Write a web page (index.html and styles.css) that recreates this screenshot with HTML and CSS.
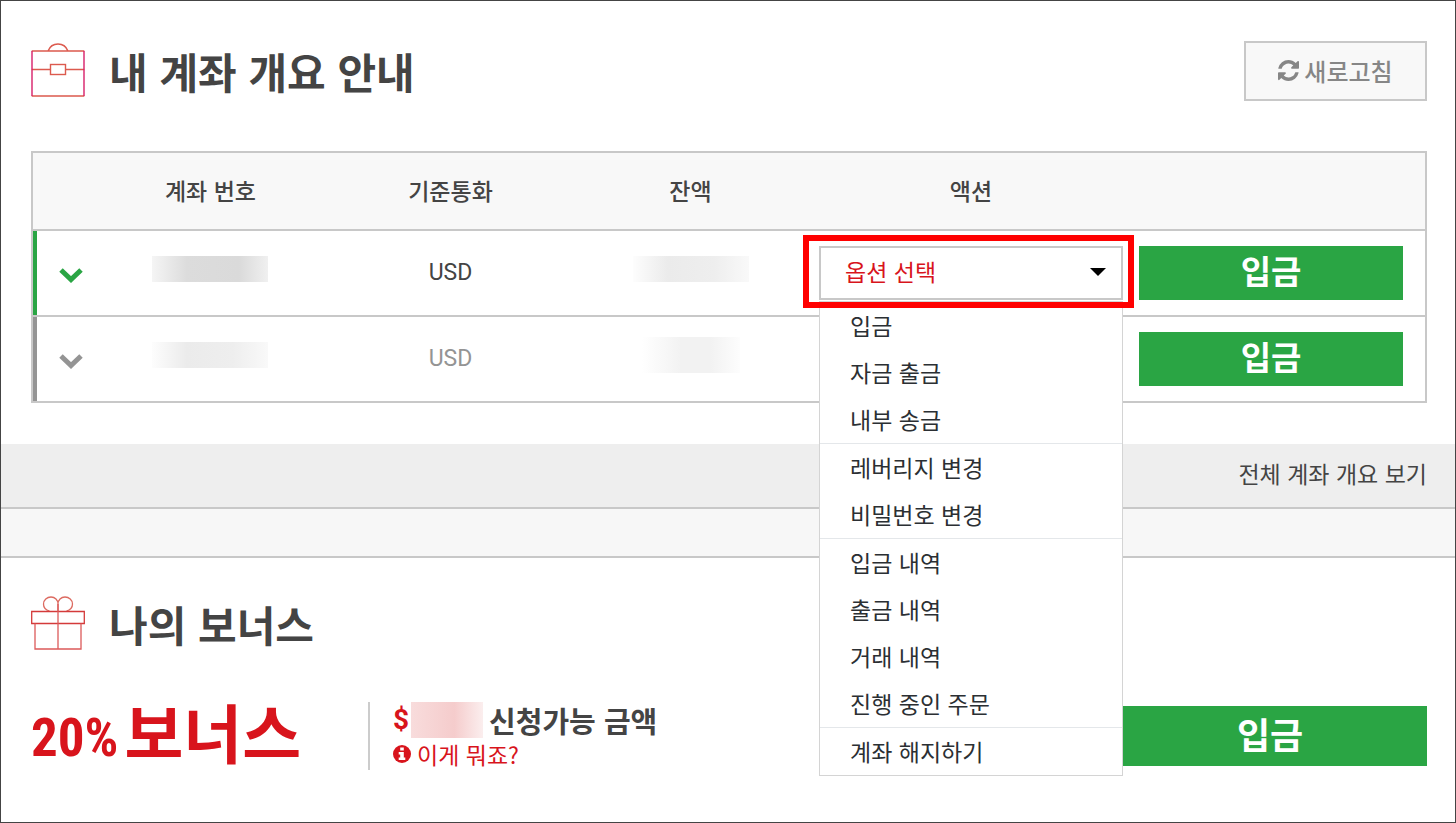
FILE: index.html
```html
<!DOCTYPE html>
<html lang="ko">
<head>
    <meta charset="UTF-8">
    <meta name="viewport" content="width=device-width, initial-scale=1.0">
    <title>내 계좌 개요 안내</title>
    <link rel="stylesheet" href="styles.css">
</head>
<body>
    <main class="page">
        <section class="accounts">
            <header class="section-header">
                <svg class="section-icon" viewBox="0 0 54 54" fill="none" stroke-width="1.4">
                    <path d="M17 8C19 3 23 1 27 1s8 2 10 7M.7 8h52.6M.7 53h52.6M.7 26.500H19M35 26.500h18.300" stroke="#dc5a4e"/>
                    <path d="M1 8v45M53 8v45" stroke="#d8206a"/>
                    <rect x="19.500" y="21.500" width="15" height="10" stroke="#dc5a4e"/>
                </svg>
                <h1>내 계좌 개요 안내</h1>
                <button class="refresh-btn" type="button">
                    <svg class="refresh-icon" viewBox="0 0 1536 1536" fill="currentColor">
                        <path d="M1511 928q0 5-1 7-64 268-268 434.500T764 1536q-146 0-282.500-55T238 1324l-129 129q-19 19-45 19t-45-19-19-45V960q0-26 19-45t45-19h448q26 0 45 19t19 45-19 45l-137 137q71 66 161 102t187 36q134 0 250-65t186-179q11-17 53-117 8-23 30-23h192q13 0 22.500 9.500t9.500 22.500zm25-800v448q0 26-19 45t-45 19h-448q-26 0-45-19t-19-45 19-45l138-138Q969 256 768 256q-134 0-250 65T332 500q-11 17-53 117-8 23-30 23H50q-13 0-22.500-9.500T18 608v-7q65-268 270-434.500T768 0q146 0 284 55.500T1297 212l130-129q19-19 45-19t45 19 19 45z"/>
                    </svg>
                    <span>새로고침</span>
                </button>
            </header>

            <table class="account-table">
                <colgroup>
                    <col class="col-toggle">
                    <col class="col-number">
                    <col>
                    <col class="col-balance">
                    <col class="col-action">
                    <col class="col-deposit">
                </colgroup>
                <thead>
                    <tr>
                        <th></th>
                        <th>계좌 번호</th>
                        <th>기준통화</th>
                        <th>잔액</th>
                        <th>액션</th>
                        <th></th>
                    </tr>
                </thead>
                <tbody>
                    <tr class="active">
                        <td class="toggle-cell">
                            <button class="toggle" type="button" aria-label="계좌 상세">
                                <svg viewBox="0 0 24 16" fill="none" stroke="currentColor" stroke-width="5"><path d="M2 3l10 9.500L22 3"/></svg>
                            </button>
                        </td>
                        <td><span class="masked masked-dark"></span></td>
                        <td>USD</td>
                        <td><span class="masked"></span></td>
                        <td class="action-cell">
                            <div class="dropdown">
                                <select class="option-select" aria-label="액션">
                                    <option>옵션 선택</option>
                                </select>
                                <ul class="menu">
                                    <li><a href="#">입금</a></li>
                                    <li><a href="#">자금 출금</a></li>
                                    <li><a href="#">내부 송금</a></li>
                                    <li class="divided"><a href="#">레버리지 변경</a></li>
                                    <li><a href="#">비밀번호 변경</a></li>
                                    <li class="divided"><a href="#">입금 내역</a></li>
                                    <li><a href="#">출금 내역</a></li>
                                    <li><a href="#">거래 내역</a></li>
                                    <li><a href="#">진행 중인 주문</a></li>
                                    <li class="divided"><a href="#">계좌 해지하기</a></li>
                                </ul>
                                <div class="highlight"></div>
                            </div>
                        </td>
                        <td class="deposit-cell"><button class="deposit-btn" type="button">입금</button></td>
                    </tr>
                    <tr class="inactive">
                        <td class="toggle-cell">
                            <button class="toggle" type="button" aria-label="계좌 상세">
                                <svg viewBox="0 0 24 16" fill="none" stroke="currentColor" stroke-width="5"><path d="M2 3l10 9.500L22 3"/></svg>
                            </button>
                        </td>
                        <td><span class="masked"></span></td>
                        <td>USD</td>
                        <td><span class="masked masked-light"></span></td>
                        <td></td>
                        <td class="deposit-cell"><button class="deposit-btn" type="button">입금</button></td>
                    </tr>
                </tbody>
            </table>
        </section>

        <div class="overview-bar">
            <a href="#">전체 계좌 개요 보기</a>
        </div>
        <div class="spacer"></div>

        <section class="bonus">
            <header class="section-header">
                <svg class="section-icon" viewBox="0 0 54 54" fill="none" stroke-width="1.300">
                    <path d="M27 15V8c0-4-3-7-7-7s-7.500 3-7.500 7 2.500 6 6 7M27 8c0-4 3-7 7-7s7.500 3 7.500 7-2.500 6-6 7" stroke="#dc6a60"/>
                    <path d="M.7 15.500h52.600v12H.7z" stroke="#d43a3a"/>
                    <path d="M4 27.500V53h46V27.500M27 8v45" stroke="#dc5a5a"/>
                </svg>
                <h2>나의 보너스</h2>
            </header>

            <div class="bonus-row">
                <div class="bonus-rate"><span class="rate">20%</span><span>보너스</span></div>
                <div class="bonus-info">
                    <div class="amount"><span class="price">$</span><span class="masked-amount"></span>신청가능 금액</div>
                    <a class="help" href="#">
                        <svg class="info-icon" viewBox="0 0 18 18">
                            <circle cx="9" cy="9" r="9" fill="#d8141c"/>
                            <path d="M7.200 2.500h3.600v3H7.200zM5.700 7h5.100v5.500h1.500V15H5.700v-2.500h1.500V9.500H5.700z" fill="#fff"/>
                        </svg>
                        <span>이게 뭐죠?</span>
                    </a>
                </div>
                <button class="deposit-btn bonus-btn" type="button">입금</button>
            </div>
        </section>
    </main>
</body>
</html>
```

FILE: styles.css
```css
:root {
    --text: #444;
    --red: #d8141c;
    --green: #2aa544;
    --border: #c8c8c8;
    --panel: #f8f8f8;
}

* {
    box-sizing: border-box;
}

body {
    margin: 0;
    font-family: "Noto Sans CJK KR", sans-serif;
    font-size: 23px;
    line-height: 32px;
    color: var(--text);
    background: #fff;
}

button,
select {
    font-family: inherit;
    cursor: pointer;
}

a {
    color: inherit;
    text-decoration: none;
}

svg {
    display: block;
}

.page {
    min-height: 100vh;
    border: 1px solid #444;
}

.accounts {
    padding: 40px 28px 41px 30px;
}

.section-header {
    display: flex;
    align-items: center;
    gap: 24px;
    height: 60px;
}

.section-icon {
    width: 54px;
    height: 54px;
    margin-bottom: 2px;
}

h1,
h2 {
    margin: 0;
    padding-bottom: 1px;
    font-size: 42px;
    line-height: 57px;
    font-weight: 700;
}

.refresh-btn {
    display: flex;
    align-items: center;
    justify-content: center;
    gap: 5px;
    width: 183px;
    height: 60px;
    margin-left: auto;
    padding: 0 0 2px;
    background: var(--panel);
    border: 2px solid var(--border);
    color: #868686;
    font-size: 24px;
    font-weight: 500;
}

.refresh-icon {
    width: 21px;
    height: 21px;
}

/* account table */
.account-table {
    width: 100%;
    margin-top: 50px;
    table-layout: fixed;
    border-collapse: collapse;
    border: 2px solid var(--border);
}

.col-toggle {
    width: 60px;
}

.col-number,
.col-balance {
    width: 17%;
}

.col-action {
    width: 324px;
}

.col-deposit {
    width: 293px;
}

.account-table th,
.account-table td {
    padding: 0;
    text-align: center;
    border-bottom: 2px solid var(--border);
}

.account-table th {
    height: 78px;
    padding-bottom: 2px;
    background: var(--panel);
    font-weight: 500;
}

.account-table td {
    height: 86px;
    font-family: Roboto, "Noto Sans CJK KR", sans-serif;
}

.account-table .toggle-cell {
    position: relative;
    padding-left: 26px;
}

.toggle-cell::before {
    content: "";
    position: absolute;
    top: 0;
    bottom: 0;
    left: 0;
    width: 4px;
    background: currentColor;
}

.active .toggle-cell {
    color: var(--green);
}

.inactive td {
    color: #949494;
}

.toggle {
    display: block;
    width: 24px;
    padding: 4px 0 0;
    border: 0;
    background: none;
    color: inherit;
}

.masked {
    display: block;
    width: 116px;
    height: 26px;
    margin: 0 auto 8px;
    background: linear-gradient(90deg, #fdfdfd, #ebebeb 30%, #eee 70%, #f9f9f9);
}

.masked-dark {
    background: linear-gradient(90deg, #f5f5f5, #dcdcdc 30%, #dadada 75%, #f0f0f0);
}

.masked-light {
    width: 98px;
    height: 36px;
    background: linear-gradient(90deg, #fff, #f2f2f2 40%, #f2f2f2 70%, #fdfdfd);
}

.account-table .action-cell {
    padding: 0 10px;
}

.dropdown {
    position: relative;
    height: 54px;
}

.option-select {
    appearance: none;
    display: block;
    width: 100%;
    height: 54px;
    padding: 0 24px 5px;
    border: 2px solid var(--border);
    border-radius: 0;
    background: #fff;
    color: var(--red);
    font-family: "Noto Sans CJK KR", sans-serif;
    font-size: 23px;
}

.dropdown::before {
    content: "";
    position: absolute;
    top: 22px;
    right: 17px;
    border: 8px solid transparent;
    border-top-color: #000;
    border-bottom: 0;
}

.menu {
    position: absolute;
    z-index: 1;
    top: 55px;
    left: 0;
    width: 100%;
    margin: 0;
    padding: 0;
    list-style: none;
    background: #fff;
    border: 1px solid #d4d4d4;
    color: #2b2f33;
    font-family: "Noto Sans CJK KR", sans-serif;
    text-align: left;
}

.menu a {
    display: block;
    padding: 0 30px;
    line-height: 47px;
}

.menu .divided {
    border-top: 1px solid #e4e7ea;
}

.highlight {
    position: absolute;
    z-index: 2;
    inset: -11px -11px -8px -16px;
    border: 6px solid #f00;
    pointer-events: none;
}

.account-table .deposit-cell {
    padding: 0 22px 0 6px;
}

.deposit-btn {
    display: block;
    width: 100%;
    height: 54px;
    padding: 0 0 6px;
    border: 0;
    background: var(--green);
    color: #fff;
    font-family: "Noto Sans CJK KR", sans-serif;
    font-size: 33px;
    line-height: 48px;
    font-weight: 700;
}

/* links below the table */
.overview-bar {
    padding: 13px 28px 18px;
    background: #eee;
    border-bottom: 2px solid var(--border);
    text-align: right;
}

.spacer {
    height: 49px;
    background: #f7f7f7;
    border-bottom: 2px solid var(--border);
}

/* bonus */
.bonus {
    padding: 36px 28px 50px 30px;
}

.bonus-row {
    display: flex;
    align-items: center;
    margin-top: 48px;
}

.bonus-rate {
    display: flex;
    gap: 6px;
    width: 337px;
    height: 68px;
    color: var(--red);
    font-size: 64px;
    line-height: 56px;
    font-weight: 700;
    white-space: nowrap;
}

.rate {
    font-family: "Roboto Condensed", "Liberation Sans Narrow", sans-serif;
    font-size: 53px;
    line-height: 72px;
}

.bonus-info {
    height: 68px;
    padding-left: 23px;
    border-left: 2px solid #ccc;
}

.amount {
    display: flex;
    align-items: center;
    height: 36px;
    font-size: 29px;
    line-height: 36px;
    font-weight: 700;
}

.price {
    color: var(--red);
    font-family: Roboto, sans-serif;
    font-size: 28px;
}

.masked-amount {
    width: 72px;
    height: 36px;
    margin: 0 6px 0 2px;
    background: linear-gradient(90deg, #f8dcdc, #f5cccc 60%, #fbeeee);
}

.help {
    display: flex;
    align-items: center;
    gap: 6px;
    color: var(--red);
}

.info-icon {
    width: 18px;
    height: 18px;
}

.bonus-btn {
    width: 314px;
    height: 60px;
    margin-left: auto;
    font-size: 36px;
}
```
